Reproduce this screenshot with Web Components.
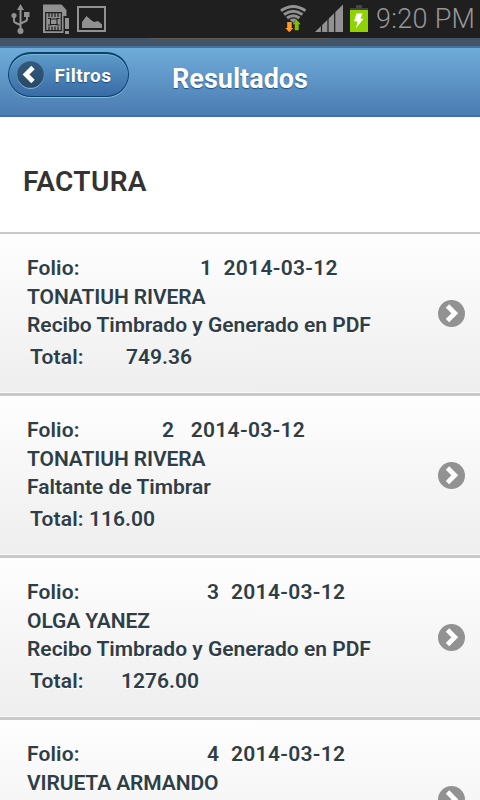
<!DOCTYPE html>
<html lang="es">
<head>
<meta charset="utf-8">
<title>Resultados</title>
<style>
html,body{margin:0;height:100%;overflow:hidden;background:#fff;font-family:Roboto,"Liberation Sans",sans-serif}
</style>
</head>
<body>
<results-page></results-page>
<script>
const define = (name, html) => customElements.define(name, class extends HTMLElement {
  connectedCallback() {
    if (this.shadowRoot) return;
    const t = document.createElement('template');
    t.innerHTML = typeof html === 'function' ? html(this) : html;
    this.attachShadow({mode: 'open'}).append(t.content.cloneNode(true));
  }
});

define('status-bar', `
<style>
:host{display:flex;box-sizing:border-box;height:38px;background:#1f1f1f;justify-content:space-between}
svg{display:block;flex:none}
.right{display:flex}
time{font-size:27px;line-height:38px;color:#969696;width:104px;white-space:nowrap;letter-spacing:.3px;font-weight:300}
</style>
<svg width="120" height="38" viewBox="0 0 120 38" fill="none" stroke="#919191">
  <path d="M20.500 9v20M14 17v3.500q0 2 2 2.500l4.500 2M27 15v4q0 2-2 2.500l-4.500 2" stroke-width="2"/>
  <path d="M20.500 4l3.500 6h-7zM24 12h5.500v5H24z" fill="#919191" stroke="none"/>
  <circle cx="14" cy="15.500" r="2.600" fill="#919191" stroke="none"/><circle cx="20.500" cy="31" r="3" fill="#919191" stroke="none"/>
  <path d="M43 4.500h18.500l5 5.500V16h-3v17H43z" fill="#919191" stroke="none"/>
  <path d="M45.700 12.700h15.600v18H45.700z" stroke="#1f1f1f" stroke-width="1.200"/>
  <path d="M49 13v4M52 13v4M55 13v4M58 13v4M49 26.500v4M52 26.500v4M55 26.500v4M58 26.500v4" stroke="#1f1f1f" stroke-width="1.200"/>
  <path d="M48 18.500h2.500v6.500H48M59.500 18.500H57v6.500h2.500M50.500 19h6.500v5.500h-6.500z" stroke="#1f1f1f" stroke-width="1.100"/>
  <path d="M65 18h4v11h-4zM65 31h4v3h-4z" fill="#919191" stroke="none"/>
  <path d="M78 7h27v24H78z" stroke-width="2"/>
  <path d="M82 28v-6l4.500-6 4.500 4 3 2 4-1 4 3.500V28z" fill="#919191" stroke="none"/>
</svg>
<div class="right">
<svg width="96" height="38" viewBox="280 0 96 38">
  <g fill="none" stroke="#919191" stroke-width="3">
    <path d="M281 10.700q12.200-8.500 24.500 0M284 14.500q9.200-6.500 18.500 0M287 18q6.200-4.500 12.500 0"/>
  </g>
  <path d="M289.500 19.800q3.800-2.500 7.600 0l-3.800 3z" fill="#919191"/>
  <path d="M287.200 22h4.500v6h1.600l-4 4.300-4-4.300h1.900z" fill="#ff9a2e"/>
  <path d="M294.700 30.300v-6h-2l4-4.500 4 4.500h-2v6z" fill="#84bd00"/>
  <path d="M315 32L343 4.500V32z" fill="#919191"/>
  <path d="M321.500 24v8M328 18v14M334.700 12v20" stroke="#1f1f1f" stroke-width="1.200"/>
  <path d="M356 5h6v3h6v2h-18V8h6z" fill="#454545"/>
  <path d="M350 10h18v22h-18z" fill="#8fd400"/>
  <path d="M356.500 13.500h6l-2 5 3 .2-7.500 9.500 1.500-6.700-3.500-.3z" fill="#fff"/>
</svg>
<time>9:20 PM</time>
</div>`);

define('back-button', `
<style>
:host{display:flex;box-sizing:border-box;width:121px;height:45px;border:1px solid #07436a;border-width:2px 1px 1px;border-radius:23px;align-items:center;padding-left:8px;
background:linear-gradient(#5d9bc9,#396ba5);box-shadow:0 1px 0 #8fb9da,inset 0 1px 0 #7fb2d8;color:#fff;font-weight:700;font-size:19px}
svg{display:block;margin-right:10.500px}
span{text-shadow:0 1px 1px #194b7e;letter-spacing:.4px}
</style>
<svg width="27" height="30" viewBox="0 0 27 30"><defs><linearGradient id="g" x2="0" y2="1"><stop stop-color="#315a7c"/><stop offset="1" stop-color="#294967"/></linearGradient></defs>
<circle cx="13.500" cy="15.700" r="13.200" fill="#86aed1"/><circle cx="13.500" cy="14.500" r="13.300" fill="url(#g)"/>
<path d="M16 7.500l-7 7 7 7" fill="none" stroke="#fff" stroke-width="4.800"/></svg>
<span><slot></slot></span>`);

define('app-header', `
<style>
:host{display:grid;grid-template-columns:121px 1fr 121px;box-sizing:border-box;height:71px;padding:4px 8px 0;border-top:2px solid #456f9d;border-bottom:2px solid #426f9e;
background:linear-gradient(#6facd9,#4b7cb2);align-items:start}
h1{margin:0;text-align:center;font-size:27px;line-height:54px;color:#fff;font-weight:700;text-shadow:0 1px 1px #254f7b;white-space:nowrap}
</style>
<slot name="back"></slot><h1><slot></slot></h1>`);

define('list-heading', `
<style>
:host{display:flex;box-sizing:border-box;height:117px;padding:13px 23px 0;align-items:center;border-bottom:2px solid #c9c9c9;background:#fff}
h2{margin:0;font-size:28px;font-weight:600;color:#333;letter-spacing:.35px}
</style><h2><slot></slot></h2>`);

define('folio-row', el => {
  const a = n => el.getAttribute(n) || '';
  const rest = a('total') ? `<div class="state">${a('state')}</div>
<div class="line total"><span class="label" style="width:${a('total-x')-30}px">Total:</span><span class="amount">${a('total')}</span></div>` : '';
  return `
<style>
:host{display:flex;box-sizing:border-box;height:162px;padding:20px 15px 0 27px;border-bottom:3px solid #c9c9c9;
background:linear-gradient(#fefefe,#eee);box-shadow:inset 0 -1px 0 #fafafa;
color:#2f3e46;font-size:21px;font-weight:600;line-height:28px;text-shadow:0 1px 0 #fff;white-space:nowrap}
.text{flex:1;min-width:0}
.line{display:flex;height:29px}
.name{height:28px;letter-spacing:-.1px}
.state{height:32px}
.line span{flex:none}
.label{letter-spacing:.15px}
.date{letter-spacing:.3px}
.total{padding-left:3px}
svg{display:block;flex:none;align-self:flex-start;margin-top:45.500px}
</style>
<div class="text">
<div class="line"><span class="label" style="width:${a('num-x')-27}px">Folio:</span><span style="width:${a('date-x')-a('num-x')}px">${a('num')}</span><span class="date">2014-03-12</span></div>
<div class="name">${a('name')}</div>
${rest}
</div>
<svg width="27" height="27" viewBox="0 0 27 27"><circle cx="13.500" cy="13.500" r="13.500" fill="#929292"/><path d="M9.500 6l7.300 7.300-7.300 7.300" fill="none" stroke="#fff" stroke-width="4.800"/></svg>`;
});

define('results-page', `
<style>
:host{display:flex;flex-direction:column;width:480px;height:800px;overflow:hidden}
.strip,status-bar,app-header,list-heading,folio-row{flex:none}
.strip{height:8px;background:linear-gradient(90deg,transparent 150px,#5d5a5a 150px 330px,transparent 330px) 0 0/100% 1px no-repeat,#435466}
</style>
<status-bar></status-bar>
<div class="strip"></div>
<app-header><back-button slot="back">Filtros</back-button>Resultados</app-header>
<list-heading>FACTURA</list-heading>
<folio-row num="1" num-x="200" date-x="223.500" name="TONATIUH RIVERA" state="Recibo Timbrado y Generado en PDF" total="749.36" total-x="126"></folio-row>
<folio-row num="2" num-x="162" date-x="190.700" name="TONATIUH RIVERA" state="Faltante de Timbrar" total="116.00" total-x="89"></folio-row>
<folio-row num="3" num-x="207" date-x="231" name="OLGA YANEZ" state="Recibo Timbrado y Generado en PDF" total="1276.00" total-x="121"></folio-row>
<folio-row num="4" num-x="207" date-x="231" name="VIRUETA ARMANDO"></folio-row>
`);
</script>
</body>
</html>
